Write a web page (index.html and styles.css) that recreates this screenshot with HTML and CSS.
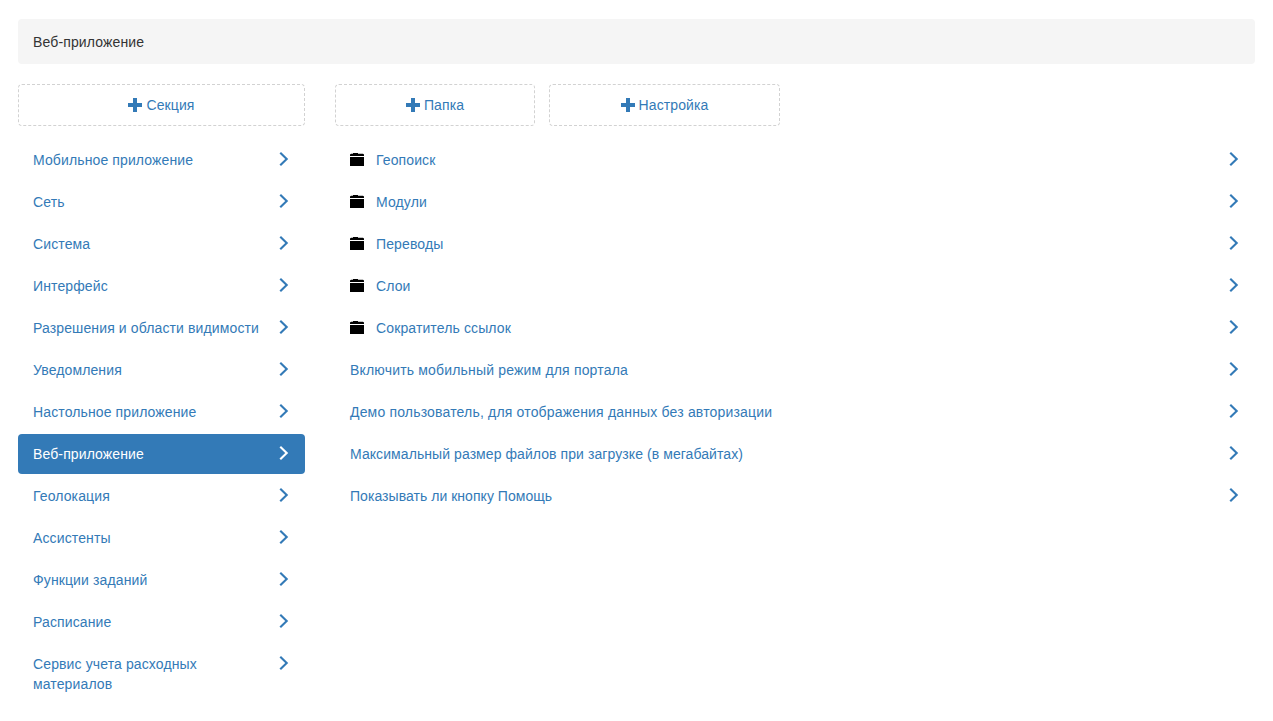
FILE: index.html
```html
<!DOCTYPE html>
<html lang="ru">
<head>
<meta charset="utf-8">
<title>Веб-приложение</title>
<link rel="stylesheet" href="styles.css">
</head>
<body>
<svg class="defs" width="0" height="0" aria-hidden="true">
  <symbol id="chev" viewBox="0 0 10 14"><path d="M2 0 L9.2 7 L2 14 L0.5 12.6 L6.2 7 L0.5 1.4 Z"/></symbol>
  <symbol id="plus" viewBox="0 0 14 14"><path d="M5 0 H9 V5 H14 V9 H9 V14 H5 V9 H0 V5 H5 Z"/></symbol>
  <symbol id="folder" viewBox="0 0 14 13"><path d="M3 0 H8 V0.8 H13 L14 1.5 V3 H0 V1.5 L1 0.8 H3 Z M0 4 H14 V13 H0 Z"/></symbol>
</svg>
<div class="page">
  <div class="crumb"><span class="sp-mid">Веб-приложение</span></div>
  <div class="cols">
    <div class="left">
      <div class="actions">
        <a class="add add-wide"><svg class="plus"><use href="#plus"/></svg>Секция</a>
      </div>
      <ul class="list">
        <li class="row"><span class="label">Мобильное приложение</span><svg class="chev"><use href="#chev"/></svg></li>
        <li class="row"><span class="label">Сеть</span><svg class="chev"><use href="#chev"/></svg></li>
        <li class="row"><span class="label">Система</span><svg class="chev"><use href="#chev"/></svg></li>
        <li class="row"><span class="label">Интерфейс</span><svg class="chev"><use href="#chev"/></svg></li>
        <li class="row"><span class="label">Разрешения и области видимости</span><svg class="chev"><use href="#chev"/></svg></li>
        <li class="row"><span class="label">Уведомления</span><svg class="chev"><use href="#chev"/></svg></li>
        <li class="row"><span class="label">Настольное приложение</span><svg class="chev"><use href="#chev"/></svg></li>
        <li class="row active"><span class="label">Веб-приложение</span><svg class="chev"><use href="#chev"/></svg></li>
        <li class="row"><span class="label">Геолокация</span><svg class="chev"><use href="#chev"/></svg></li>
        <li class="row"><span class="label">Ассистенты</span><svg class="chev"><use href="#chev"/></svg></li>
        <li class="row"><span class="label">Функции заданий</span><svg class="chev"><use href="#chev"/></svg></li>
        <li class="row"><span class="label">Расписание</span><svg class="chev"><use href="#chev"/></svg></li>
        <li class="row"><span class="label">Сервис учета расходных материалов</span><svg class="chev"><use href="#chev"/></svg></li>
      </ul>
    </div>
    <div class="right">
      <div class="actions">
        <a class="add add-folder"><svg class="plus"><use href="#plus"/></svg>Папка</a>
        <a class="add add-setting"><svg class="plus"><use href="#plus"/></svg>Настройка</a>
      </div>
      <ul class="list">
        <li class="row"><svg class="folder"><use href="#folder"/></svg><span class="label">Геопоиск</span><svg class="chev"><use href="#chev"/></svg></li>
        <li class="row"><svg class="folder"><use href="#folder"/></svg><span class="label">Модули</span><svg class="chev"><use href="#chev"/></svg></li>
        <li class="row"><svg class="folder"><use href="#folder"/></svg><span class="label">Переводы</span><svg class="chev"><use href="#chev"/></svg></li>
        <li class="row"><svg class="folder"><use href="#folder"/></svg><span class="label">Слои</span><svg class="chev"><use href="#chev"/></svg></li>
        <li class="row"><svg class="folder"><use href="#folder"/></svg><span class="label">Сократитель ссылок</span><svg class="chev"><use href="#chev"/></svg></li>
        <li class="row"><span class="label sp-wide">Включить мобильный режим для портала</span><svg class="chev"><use href="#chev"/></svg></li>
        <li class="row"><span class="label sp-wide">Демо пользователь, для отображения данных без авторизации</span><svg class="chev"><use href="#chev"/></svg></li>
        <li class="row"><span class="label sp-narrow">Максимальный размер файлов при загрузке (в мегабайтах)</span><svg class="chev"><use href="#chev"/></svg></li>
        <li class="row"><span class="label sp-tight">Показывать ли кнопку Помощь</span><svg class="chev"><use href="#chev"/></svg></li>
      </ul>
    </div>
  </div>
</div>
</body>
</html>
```
FILE: styles.css
```css
* { box-sizing: border-box; }
html, body { margin: 0; padding: 0; background: #fff; overflow: hidden; }
body {
  font-family: "Liberation Sans", Arial, sans-serif;
  font-size: 14px;
  line-height: 20px;
  color: #333;
  letter-spacing: 0.12px;
}
.defs { position: absolute; }
.page { padding: 19px 18px 0; }
.crumb {
  height: 45px;
  padding: 13px 15px 12px;
  background: #f5f5f5;
  border-radius: 4px;
  margin-bottom: 20px;
}
.cols { display: flex; gap: 30px; align-items: flex-start; }
.left { width: 287px; flex: none; }
.right { flex: 1; min-width: 0; }
.actions { display: flex; gap: 14px; margin-bottom: 14px; }
.add {
  height: 42px;
  display: flex;
  align-items: center;
  justify-content: center;
  border: 1px dashed #d2d2d2;
  border-radius: 4px;
  color: #337ab7;
}
.add-wide { width: 100%; }
.add-folder { width: 200px; }
.add-setting { width: 231px; }
.plus { width: 14px; height: 14px; margin-right: 4px; fill: #337ab7; }
.list { list-style: none; margin: 0; padding: 0; display: flex; flex-direction: column; gap: 2px; }
.row {
  display: flex;
  align-items: flex-start;
  padding: 10px 16px 10px 15px;
  border-radius: 4px;
  color: #337ab7;
}
.row .label { flex: 1; min-width: 0; padding-right: 15px; }
.sp-mid { letter-spacing: 0.14px; }
.sp-wide { letter-spacing: 0.175px; }
.sp-narrow { letter-spacing: 0.075px; }
.sp-tight { letter-spacing: 0.04px; }
.chev { width: 10px; height: 14px; margin-top: 2px; flex: none; fill: #337ab7; }
.folder { width: 14px; height: 13px; margin: 3px 12px 0 0; flex: none; fill: #000; }
.active { background: #337ab7; color: #fff; }
.active .chev { fill: #fff; }
```
